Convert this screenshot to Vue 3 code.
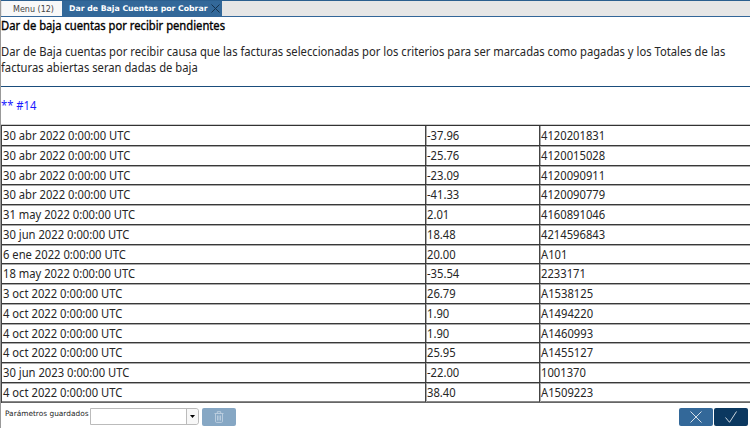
<script setup>
const rows = [
  ['30 abr 2022 0:00:00 UTC', '-37.96', '4120201831'],
  ['30 abr 2022 0:00:00 UTC', '-25.76', '4120015028'],
  ['30 abr 2022 0:00:00 UTC', '-23.09', '4120090911'],
  ['30 abr 2022 0:00:00 UTC', '-41.33', '4120090779'],
  ['31 may 2022 0:00:00 UTC', '2.01', '4160891046'],
  ['30 jun 2022 0:00:00 UTC', '18.48', '4214596843'],
  ['6 ene 2022 0:00:00 UTC', '20.00', 'A101'],
  ['18 may 2022 0:00:00 UTC', '-35.54', '2233171'],
  ['3 oct 2022 0:00:00 UTC', '26.79', 'A1538125'],
  ['4 oct 2022 0:00:00 UTC', '1.90', 'A1494220'],
  ['4 oct 2022 0:00:00 UTC', '1.90', 'A1460993'],
  ['4 oct 2022 0:00:00 UTC', '25.95', 'A1455127'],
  ['30 jun 2023 0:00:00 UTC', '-22.00', '1001370'],
  ['4 oct 2022 0:00:00 UTC', '38.40', 'A1509223'],
]
</script>

<template>
  <div class="window">
    <nav class="tabs">
      <div class="tab">Menu (12)</div>
      <div class="tab active">
        <span>Dar de Baja Cuentas por Cobrar</span>
        <svg class="close" viewBox="0 0 9 9"><path d="M.5 .5 8.5 8.5M8.5 .5 .5 8.5" /></svg>
      </div>
    </nav>
    <main class="content">
      <h1><span class="text">Dar de baja cuentas por recibir pendientes</span></h1>
      <p class="message">
        <span class="text">Dar de Baja cuentas por recibir causa que las facturas seleccionadas por los criterios para ser marcadas como pagadas y los Totales de las</span>
        <span class="text">facturas abiertas seran dadas de baja</span>
      </p>
      <div class="rule"></div>
      <p class="count"><span class="text">** #14</span></p>
      <div class="grid">
        <div v-for="(row, i) in rows" :key="i" class="row">
          <div v-for="(cell, j) in row" :key="j" class="cell"><span class="text">{{ cell }}</span></div>
        </div>
      </div>
    </main>
    <footer class="footer">
      <label>Parámetros guardados</label>
      <div class="combo">
        <div class="field"></div>
        <div class="arrow"><svg viewBox="0 0 5 3"><path d="M0 0H5L2.5 3Z" /></svg></div>
      </div>
      <div class="btn trash">
        <svg viewBox="0 0 10 12"><path d="M.5 2.5H9.5M3.3 2.2V.7H6.7V2.2M1.5 3V10.3Q1.5 11.4 2.6 11.4H7.4Q8.5 11.4 8.5 10.3V3M3.5 4.5V9.5M5 4.5V9.5M6.5 4.5V9.5" /></svg>
      </div>
      <div class="spacer"></div>
      <div class="btn cancel"><svg viewBox="0 0 12 12"><path d="M.5 .5 11.5 11.5M11.5 .5 .5 11.5" /></svg></div>
      <div class="btn ok"><svg viewBox="0 0 12 12"><path d="M.5 6.5 4.5 11.3 11.5 .5" /></svg></div>
    </footer>
  </div>
</template>

<style>
body { background: #fff; overflow: hidden; }
</style>

<style scoped>
.window {
  box-sizing: border-box;
  width: 750px;
  height: 428px;
  overflow: hidden;
  display: flex;
  flex-direction: column;
  border-left: 1px solid #999;
  font-family: "Noto Sans", "Open Sans", sans-serif;
  color: #262626;
  background: #fff;
}
.text {
  display: block;
  width: max-content;
  font-size: 12px;
  transform: translateY(0.5px) scaleX(0.935);
  transform-origin: 0 50%;
}
.tabs {
  box-sizing: border-box;
  height: 17px;
  flex: none;
  display: flex;
  background: #e6e6e6;
  border-top: 1px solid #2b5f8f;
  border-bottom: 1px solid #336699;
  font-family: "DejaVu Sans", sans-serif;
  font-size: 8px;
  line-height: 17px;
}
.tab {
  box-sizing: border-box;
  width: 60px;
  margin-left: 1px;
  padding-left: 11px;
  background: #f8f8f8;
  color: #444;
  white-space: nowrap;
}
.tab.active {
  width: 160px;
  margin-left: 0;
  padding-left: 7px;
  background: #336899;
  color: #fff;
  font-weight: bold;
  font-size: 7.75px;
  display: flex;
  align-items: center;
}
.close { width: 9px; height: 9px; margin-left: 4px; fill: none; stroke: #14304c; stroke-width: 1; }
.content { flex: none; height: 386px; }
h1 {
  margin: 0;
  line-height: 16px;
  font-weight: normal;
  color: #000;
  -webkit-text-stroke: 0.35px #000;
  white-space: nowrap;
}
h1 .text { transform: translateY(0.5px) scaleX(0.934); }
.message { margin: 10px 0 0; line-height: 16px; white-space: nowrap; }
.rule { height: 1px; margin-top: 11px; background: #1a4d7c; }
.count { margin: 10px 0 0; line-height: 16px; color: #1a1aff; }
.grid {
  width: 760px;
  margin-top: 12px;
  border-top: 1px solid #333;
  border-left: 1px solid #444;
  box-shadow: 0 -1px 0 #ccc;
}
.row {
  box-sizing: border-box;
  height: 19.75px;
  display: grid;
  grid-template-columns: 424px 114px 1fr;
  border-bottom: 1px solid #383838;
  box-shadow: 0 1px 0 #aaa;
  line-height: 18.75px;
}
.row:last-child { border-bottom-color: #666; box-shadow: inset 0 -1px 0 #888; }
.cell { padding-left: 1px; white-space: nowrap; border-right: 1px solid #444; box-shadow: 1px 0 0 #aaa; }
.footer { display: flex; flex: 1; align-items: flex-start; padding: 5px 2px 0 4px; }
label { width: 84px; padding-top: 1px; margin-right: 1px; font-size: 7.4px; line-height: 9px; white-space: nowrap; font-family: "DejaVu Sans", sans-serif; }
.combo { box-sizing: border-box; display: flex; width: 109px; height: 17px; border: 1px solid #bbb; border-radius: 0 3px 3px 0; }
.field { flex: 1; }
.arrow { width: 11px; display: flex; align-items: center; justify-content: center; border-left: 1px solid #bbb; background: #f7f7f7; border-radius: 0 3px 3px 0; }
.arrow svg { width: 5px; height: 3px; fill: #000; }
.btn { display: flex; align-items: center; justify-content: center; width: 34px; height: 18px; border-radius: 2px; }
.btn svg { fill: none; stroke: #fff; stroke-width: 0.8; width: 12px; height: 12px; }
.trash { margin-left: 3px; background: #86a7c4; }
.trash svg { width: 10px; height: 12px; stroke: #c6d6e4; stroke-width: 0.8; }
.spacer { flex: 1; }
.cancel { background: #336899; margin-right: 1px; }
.ok { background: #0b3860; }
</style>
